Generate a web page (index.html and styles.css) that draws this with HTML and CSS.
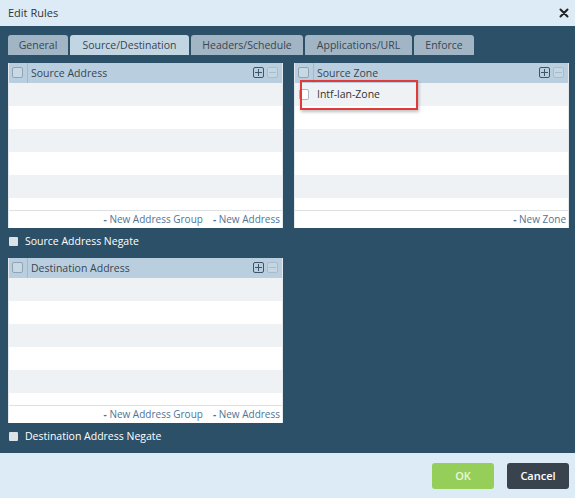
FILE: index.html
```html
<!DOCTYPE html>
<html>
<head>
<meta charset="utf-8">
<link rel="stylesheet" href="styles.css">
</head>
<body>
<div class="dialog">
  <div class="titlebar">
    <span class="title">Edit Rules</span>
    <svg class="close" width="10" height="10" viewBox="0 0 10 10"><path d="M1.5 1.5 L8.5 8.5 M8.5 1.5 L1.5 8.5" stroke="#222" stroke-width="2" stroke-linecap="round"/></svg>
  </div>
  <div class="main">
    <div class="tabs">
      <div class="tab t-general">General</div>
      <div class="tab active t-src">Source/Destination</div>
      <div class="tab t-hdr">Headers/Schedule</div>
      <div class="tab t-app">Applications/URL</div>
      <div class="tab t-enf">Enforce</div>
    </div>
    <div class="content">
      <div class="col">
        <div class="panel">
          <div class="phead">
            <span class="cb"></span><span class="sep"></span><span class="ptitle">Source Address</span>
            <span class="tools"><span class="ibtn plus"></span><span class="ibtn minus"></span></span>
          </div>
          <div class="rows">
            <div class="row odd"></div><div class="row"></div><div class="row odd"></div><div class="row"></div><div class="row odd"></div><div class="row last"></div>
          </div>
          <div class="pfoot"><span class="lnk"><b>-</b> New Address Group</span><span class="lnk"><b>-</b> New Address</span></div>
        </div>
        <div class="negate"><span class="ncb"></span>Source Address Negate</div>
        <div class="panel">
          <div class="phead">
            <span class="cb"></span><span class="sep"></span><span class="ptitle">Destination Address</span>
            <span class="tools"><span class="ibtn plus"></span><span class="ibtn minus"></span></span>
          </div>
          <div class="rows">
            <div class="row odd"></div><div class="row"></div><div class="row odd"></div><div class="row"></div><div class="row odd"></div><div class="row last"></div>
          </div>
          <div class="pfoot"><span class="lnk"><b>-</b> New Address Group</span><span class="lnk"><b>-</b> New Address</span></div>
        </div>
        <div class="negate"><span class="ncb"></span>Destination Address Negate</div>
      </div>
      <div class="col">
        <div class="panel">
          <div class="phead">
            <span class="cb"></span><span class="sep"></span><span class="ptitle">Source Zone</span>
            <span class="tools"><span class="ibtn plus"></span><span class="ibtn minus"></span></span>
          </div>
          <div class="rows">
            <div class="row odd item"><span class="cb small"></span><span class="itext">Intf-lan-Zone</span><span class="hl"></span></div>
            <div class="row"></div><div class="row odd"></div><div class="row"></div><div class="row odd"></div><div class="row last"></div>
          </div>
          <div class="pfoot"><span class="lnk"><b>-</b> New Zone</span></div>
        </div>
      </div>
    </div>
  </div>
  <div class="footer">
    <button class="btn ok">OK</button>
    <button class="btn cancel">Cancel</button>
  </div>
</div>
</body>
</html>
```
FILE: styles.css
```css
* { box-sizing: border-box; }
html, body { margin: 0; padding: 0; }
body {
  font-family: "Open Sans", "Noto Sans", sans-serif;
  font-size: 11px;
  color: #333;
  background: #2b5067;
}
.dialog {
  width: 575px;
  height: 498px;
  display: flex;
  flex-direction: column;
}
.titlebar {
  height: 26px;
  background: #dcebf6;
  display: flex;
  align-items: center;
  justify-content: space-between;
  padding: 0 6px 0 8px;
}
.title { font-size: 11px; color: #333; }
.main {
  flex: 1;
  background: #2b5067;
  padding: 9px 6px 0 8px;
}
.tabs {
  display: flex;
  height: 20px;
}
.tab {
  background: #a2b5c4;
  color: #3a4550;
  border-radius: 3px 3px 0 0;
  display: flex;
  align-items: center;
  justify-content: center;
  margin-right: 2px;
  font-size: 10.5px;
}
.tab.active { background: #c2d5e3; }
.t-general { width: 60px; }
.t-src { width: 119px; }
.t-hdr { width: 112px; }
.t-app { width: 107px; }
.t-enf { width: 60px; }
.content {
  display: grid;
  grid-template-columns: 275px 275px;
  column-gap: 11px;
  padding-top: 8px;
}
.col { display: flex; flex-direction: column; }
.panel {
  background: #fff;
  height: 165px;
  display: flex;
  flex-direction: column;
  border-left: 1px solid #e4e9ed;
  border-right: 1px solid #e4e9ed;
}
.phead {
  height: 20px;
  background: #b9cfe0;
  display: flex;
  align-items: center;
  padding-left: 3px;
  flex: none;
}
.cb {
  width: 11px;
  height: 11px;
  border: 1px solid #8fa3b2;
  border-radius: 2px;
  background: #c8d8e5;
  flex: none;
}
.sep {
  width: 1px;
  height: 20px;
  background: #a3b8c8;
  margin: 0 3px 0 4px;
}
.ptitle { color: #3a4550; font-size: 10.5px; flex: 1; }
.tools { display: flex; gap: 3px; padding-right: 4px; }
.ibtn {
  width: 11px;
  height: 11px;
  border-radius: 2px;
  position: relative;
}
.plus { border: 1px solid #3f5467; }
.minus { border: 1px solid #a8bccb; background: #c5d6e3; }
.plus::before, .plus::after, .minus::before {
  content: "";
  position: absolute;
  background: #3f5467;
}
.plus::before { left: 1px; right: 1px; top: 4px; height: 1px; }
.plus::after { top: 1px; bottom: 1px; left: 4px; width: 1px; }
.minus::before { left: 1px; right: 1px; top: 4px; height: 1px; background: #a8bccb; }
.rows { height: 127px; flex: none; }
.row { height: 23px; background: #fff; }
.row.last { height: 12px; }
.row.odd { background: #eef2f5; }
.item {
  display: flex;
  align-items: center;
  padding-left: 4px;
  position: relative;
}
.cb.small { background: #fff; border-color: #aab8c3; width: 10px; height: 11px; }
.itext { margin-left: 8px; color: #333; font-size: 10.5px; }
.hl {
  position: absolute;
  left: 5px;
  top: -3px;
  width: 118px;
  height: 30px;
  border: 2px solid #e03a3a;
  box-shadow: 1px 2px 3px rgba(0,0,0,0.25);
}
.pfoot {
  height: 18px;
  border-top: 1px solid #dde1e4;
  display: flex;
  justify-content: flex-end;
  align-items: center;
  gap: 10px;
  padding-right: 2px;
  flex: none;
}
.lnk { color: #4f7494; font-size: 10px; }
.lnk b { font-weight: 700; }
.negate {
  height: 30px;
  display: flex;
  align-items: center;
  color: #fff;
  font-size: 10.5px;
  padding-bottom: 3px;
}
.ncb {
  width: 9px;
  height: 9px;
  background: #dde2e6;
  margin: 0 7px 0 1px;
  border-radius: 1px;
}
.footer {
  height: 46px;
  background: #dcebf6;
  display: flex;
  justify-content: flex-end;
  align-items: flex-start;
  padding: 10px 6px 0 0;
  gap: 13px;
}
.btn {
  width: 62px;
  height: 26px;
  border: none;
  border-radius: 3px;
  font-family: "Open Sans", "Noto Sans", sans-serif;
  font-size: 11px;
  font-weight: 600;
}
.ok { background: #95cf5a; color: #eaf6dd; }
.cancel { background: #38434e; color: #fff; }
```
